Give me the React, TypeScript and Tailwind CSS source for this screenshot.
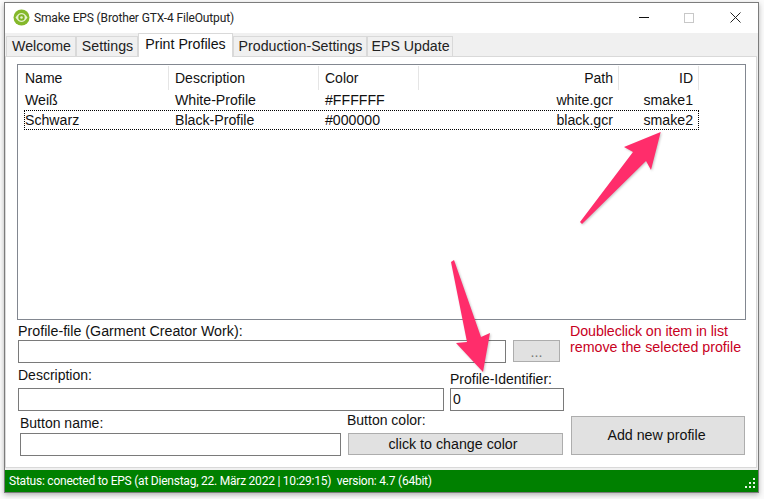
import React from "react";

const headers = [
  { t: "Name", c: "pl-[7px] text-left" },
  { t: "Description", c: "pl-[6px] text-left" },
  { t: "Color", c: "pl-[6px] text-left" },
  { t: "Path", c: "pr-[5px] text-right" },
  { t: "ID", c: "pr-[5px] text-right" },
];

const rows = [
  { n: "Weiß", d: "White-Profile", c: "#FFFFFF", p: "white.gcr", id: "smake1", sel: false },
  { n: "Schwarz", d: "Black-Profile", c: "#000000", p: "black.gcr", id: "smake2", sel: true },
];

const tabs = [
  { t: "Welcome", w: "w-[70px]" },
  { t: "Settings", w: "w-[62px]" },
  { t: "Print Profiles", w: "w-[95px]", active: true },
  { t: "Production-Settings", w: "w-[134px]" },
  { t: "EPS Update", w: "w-[86px]" },
];

const inputCls = "block h-[23px] border border-[#7a7a7a] bg-white px-[2px] text-[14px] text-[#111] outline-none";
const btnCls = "border border-[#adadad] bg-[#e1e1e1] text-[14.25px] text-[#111]";

export default function App() {
  return (
    <div className="relative h-[499px] w-[764px] overflow-hidden bg-[#fbfbfb] pl-[4px] pt-[2px] font-['Liberation_Sans',Arial,sans-serif] text-[14px] leading-[16px] text-[#111]">
      <div className="flex h-[491px] w-[755px] flex-col border border-[#7c7c7c] bg-[#f0f0f0] shadow-[0_2px_5px_rgba(0,0,0,0.28)]">
        {/* Title bar */}
        <div className="flex h-[30px] items-center bg-white pl-[8px]">
          <svg width="17" height="17" viewBox="0 0 17 17" className="shrink-0">
            <circle cx="8.5" cy="8.5" r="8" fill="#84b82a" />
            <path d="M2.5 8.5C4.5 5.3 6.5 4 8.5 4s4 1.3 6 4.5c-2 3.200-4 4.500-6 4.500s-4-1.300-6-4.500z" fill="#e6f2cf" />
            <circle cx="8.500" cy="8.500" r="3.200" fill="#7fb324" />
            <circle cx="8.500" cy="8.500" r="1.300" fill="#e6f2cf" />
          </svg>
          <span className="ml-[4px] font-['Roboto',sans-serif] text-[12px] tracking-[-0.14px] text-[#222]">Smake EPS (Brother GTX-4 FileOutput)</span>
          <div className="ml-auto flex items-center">
            <div className="mr-[35px] h-px w-[10px] bg-[#111]" />
            <div className="mr-[36px] h-[10px] w-[10px] border border-[#c8c8c8]" />
            <svg width="11" height="11" viewBox="0 0 11 11" className="mr-[17px]">
              <path d="M0.500 0.500L10.500 10.500M10.500 0.500L0.500 10.500" stroke="#222" strokeWidth="1" fill="none" />
            </svg>
          </div>
        </div>

        {/* Tabs */}
        <div className="relative z-10 -mb-px flex h-[24px] items-end pl-[1px] text-[14.2px]">
          {tabs.map((t) => (
            <div
              key={t.t}
              className={
                t.active
                  ? `${t.w} flex h-[24px] items-center justify-center border border-b-0 border-[#d9d9d9] bg-white pb-[2px] text-[#111]`
                  : `${t.w} flex h-[21px] items-center justify-center border border-b-[#d9d9d9] border-[#d9d9d9] bg-[#f0f0f0] pl-[1px] text-[#222]`
              }
            >
              {t.t}
            </div>
          ))}
        </div>

        {/* Page */}
        <div className="h-[414px] w-[752px] border border-[#d9d9d9] bg-white pl-[11px] pt-[7px]">
          {/* List */}
          <div className="h-[256px] w-[729px] border border-[#828790] bg-white">
            <div className="grid h-[25px] grid-cols-[151px_150px_100px_200px_80px]">
              {headers.map((h) => (
                <div key={h.t} className={`mt-px border-r border-[#e5e5e5] pt-[4px] ${h.c}`}>
                  {h.t}
                </div>
              ))}
            </div>
            {rows.map((r) => (
              <div
                key={r.n}
                className={`ml-[6px] grid h-[20px] w-[675px] grid-cols-[145px_150px_100px_200px_80px] items-center text-[14.15px] ${
                  r.sel ? "outline outline-1 -outline-offset-1 outline-dotted outline-black" : ""
                }`}
              >
                <div className="pl-px">{r.n}</div>
                <div className="pl-[6px]">{r.d}</div>
                <div className="pl-[6px]">{r.c}</div>
                <div className="pr-[6px] text-right">{r.p}</div>
                <div className="pr-[6px] text-right">{r.id}</div>
              </div>
            ))}
          </div>

          {/* Row A */}
          <div className="flex h-[43px] pl-px pt-[3px]">
            <div className="w-[488px]">
              <div className="mb-px h-[16px] text-[14.25px]">Profile-file (Garment Creator Work):</div>
              <input readOnly value="" className={`${inputCls} w-[488px]`} />
            </div>
            <button className={`${btnCls} ml-[7px] mt-[17px] h-[22px] w-[47px] pt-[3px] text-[#777]`}>...</button>
            <div className="ml-[10px] text-[14.25px] text-[#c8001e]">
              <div className="tracking-[-0.08px]">Doubleclick on item in list</div>
              <div>remove the selected profile</div>
            </div>
          </div>

          {/* Row B */}
          <div className="flex h-[48px] items-end pl-px">
            <div>
              <div className="mb-[5px] h-[16px]">Description:</div>
              <input readOnly value="" className={`${inputCls} w-[426px]`} />
            </div>
            <div className="ml-[6px]">
              <div className="mb-px h-[16px]">Profile-Identifier:</div>
              <input readOnly value="0" className={`${inputCls} w-[114px]`} />
            </div>
          </div>

          {/* Row C */}
          <div className="flex h-[45px] items-end pl-[3px]">
            <div>
              <div className="mb-[2px] h-[16px]">Button name:</div>
              <input readOnly value="" className={`${inputCls} w-[321px]`} />
            </div>
            <div className="mb-px ml-[6px]">
              <div className="mb-[5px] h-[16px]">Button color:</div>
              <button className={`${btnCls} ml-px h-[22px] w-[215px] pr-[5px]`}>click to change color</button>
            </div>
            <button className={`${btnCls} mb-px ml-[8px] h-[39px] w-[174px] pr-[3px]`}>Add new profile</button>
          </div>
        </div>

        {/* Status bar */}
        <div className="relative mt-[2px] flex h-[22px] items-center bg-[#008000] pl-[4px] font-['Roboto',sans-serif] text-[12px] tracking-[-0.23px] whitespace-pre text-white">
          {"Status: conected to EPS (at Dienstag, 22. März 2022 | 10:29:15)  version: 4.7 (64bit)"}
          <svg width="12" height="12" viewBox="0 0 12 12" className="absolute bottom-[2px] right-[2px]">
            <g fill="#e8f2e8">
              <rect x="9" y="0" width="2" height="2" />
              <rect x="5" y="4" width="2" height="2" />
              <rect x="9" y="4" width="2" height="2" />
              <rect x="1" y="8" width="2" height="2" />
              <rect x="5" y="8" width="2" height="2" />
              <rect x="9" y="8" width="2" height="2" />
            </g>
          </svg>
        </div>
      </div>

      {/* Annotation arrows */}
      <svg width="764" height="499" viewBox="0 0 764 499" className="pointer-events-none absolute left-0 top-0">
        <g fill="#ff2d6b" style={{ filter: "drop-shadow(1px 1px 1px rgba(0,0,0,0.22))" }}>
          <path d="M660.700 132L624 147L633 152L580 222L582 224L646 161L651 170Z" />
          <path d="M451 262L467 342L456 343L483 372L490 333L481 337L454 260Z" />
        </g>
      </svg>
    </div>
  );
}
